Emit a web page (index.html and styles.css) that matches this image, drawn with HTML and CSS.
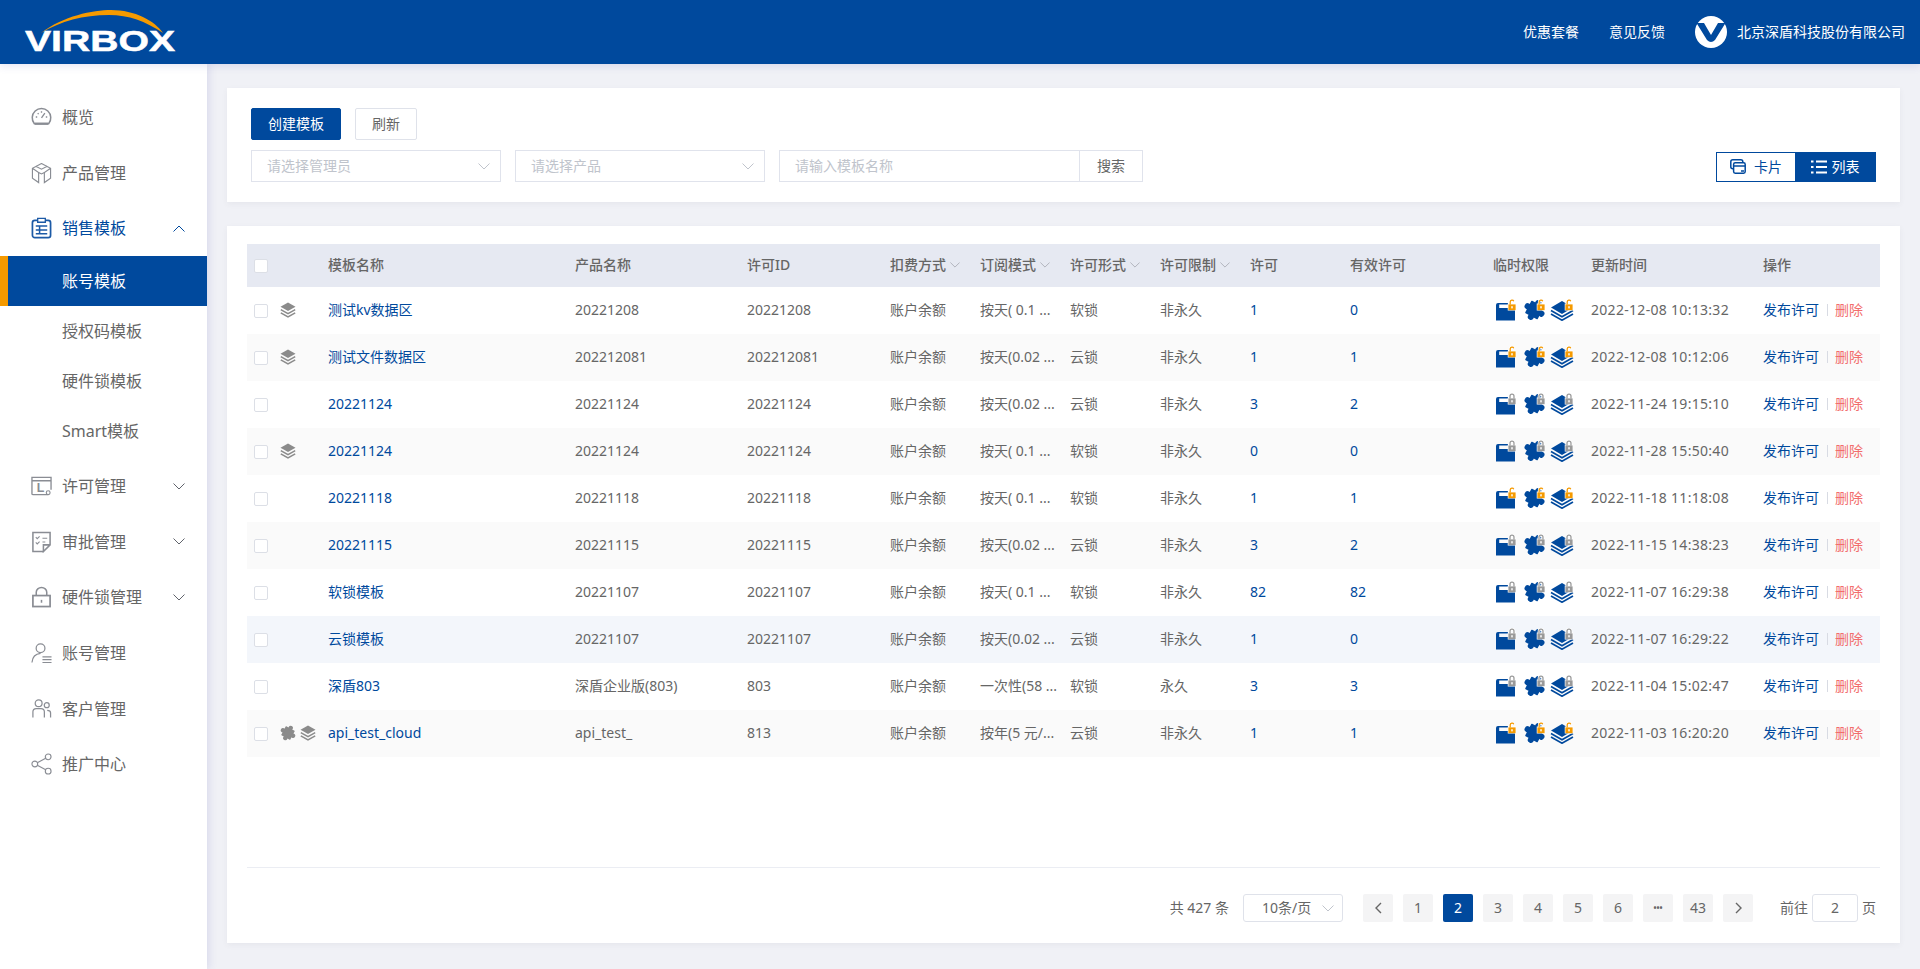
FILE: index.html
```html
<!DOCTYPE html>
<html lang="zh-CN">
<head>
<meta charset="utf-8">
<title>Virbox</title>
<link rel="stylesheet" href="styles.css">
</head>
<body>
<svg class="defs" width="0" height="0" aria-hidden="true">
  <symbol id="layers" viewBox="0 0 16 16">
    <path d="M8 0.5 15.5 4.7 8 9 0.5 4.7Z" fill="currentColor"/>
    <path d="M0.8 7.6 8 11.7 15.2 7.6M0.8 10.8 8 14.9 15.2 10.8" fill="none" stroke="currentColor" stroke-width="1.5"/>
  </symbol>
  <symbol id="puzzle" viewBox="0 0 20 20">
    <g transform="rotate(28 10 10)" fill="currentColor">
      <rect x="3.6" y="3.6" width="12.8" height="12.8" rx="0.6"/>
      <circle cx="10" cy="2.9" r="2.8"/>
      <circle cx="17.1" cy="10" r="2.8"/>
      <circle cx="10" cy="17.1" r="2.8"/>
      <circle cx="2.9" cy="10" r="2.8"/>
    </g>
  </symbol>
  <symbol id="perm-shapes" viewBox="0 0 80 22">
    <path d="M0 11H19V21.5H0Z" fill="#00499d"/>
    <path d="M0 11V6Q0 4 2 4H12V5.6H3.2V9H13V11Z" fill="#00499d"/>
    <use href="#puzzle" x="27.5" y="0" width="22" height="22" color="#00499d"/>
    <path d="M66 2 77 8.5 66 15 55 8.5Z" fill="#00499d"/>
    <path d="M55 11.5 66 17.7 77 11.5M55 15 66 21.2 77 15" fill="none" stroke="#00499d" stroke-width="1.7"/>
  </symbol>
  <symbol id="badge-open" viewBox="0 0 10 13">
    <rect x="0" y="5" width="10" height="8" fill="#fff"/>
    <path d="M3 6V3.2A2.1 2.1 0 0 1 7 2.4" fill="none" stroke="#fff" stroke-width="3"/>
    <rect x="1" y="6" width="8" height="6.5" fill="#f59a00"/>
    <path d="M3 6V3.2A2.1 2.1 0 0 1 7 2.4" fill="none" stroke="#f59a00" stroke-width="1.4"/>
    <rect x="4.2" y="8" width="1.6" height="2.4" fill="#fff"/>
  </symbol>
  <symbol id="badge-closed" viewBox="0 0 10 13">
    <rect x="0" y="5" width="10" height="8" fill="#fff"/>
    <path d="M2.8 6V3.4A2.2 2.2 0 0 1 7.2 3.4V6" fill="none" stroke="#fff" stroke-width="3"/>
    <rect x="1" y="6" width="8" height="6.5" fill="#999"/>
    <path d="M2.8 6V3.4A2.2 2.2 0 0 1 7.2 3.4V6" fill="none" stroke="#999" stroke-width="1.4"/>
    <rect x="4.2" y="8" width="1.6" height="2.4" fill="#fff"/>
  </symbol>
  <symbol id="perm-on" viewBox="0 0 80 22">
    <use href="#perm-shapes" width="80" height="22"/>
    <use href="#badge-open" x="11.5" y="0" width="9" height="11.7"/>
    <use href="#badge-open" x="40.5" y="0" width="9" height="11.7"/>
    <use href="#badge-open" x="68.5" y="0" width="9" height="11.7"/>
  </symbol>
  <symbol id="perm-off" viewBox="0 0 80 22">
    <use href="#perm-shapes" width="80" height="22"/>
    <use href="#badge-closed" x="11.5" y="0" width="9" height="11.7"/>
    <use href="#badge-closed" x="40.5" y="0" width="9" height="11.7"/>
    <use href="#badge-closed" x="68.5" y="0" width="9" height="11.7"/>
  </symbol>
  <symbol id="chev-d" viewBox="0 0 12 7"><path d="M0.5 0.5 6 6 11.5 0.5" fill="none" stroke="currentColor"/></symbol>
  <symbol id="chev-u" viewBox="0 0 12 7"><path d="M0.5 6.5 6 1 11.5 6.5" fill="none" stroke="currentColor"/></symbol>
</svg>

<header class="topbar">
  <div class="logo">
    <svg class="logo-svg" viewBox="0 0 150 44" width="150" height="44">
      <path d="M16 23C38 6 68 0 86 0 110 0 130 11 138 23 120 11 104 5 84 5 58 5 36 11 16 23Z" fill="#f59a00"/>
      <text x="0" y="41" class="logo-text" textLength="150" lengthAdjust="spacingAndGlyphs">VIRBOX</text>
    </svg>
  </div>
  <nav class="topnav">
    <a class="topnav-link">优惠套餐</a>
    <a class="topnav-link">意见反馈</a>
    <span class="company">
      <svg class="company-logo" viewBox="0 0 32 32" width="32" height="32">
        <circle cx="16" cy="16" r="16" fill="#fff"/>
        <path d="M1.5 7 H9 L16 19 L23 7 H30.5 L20 24 Q16 28 12 24Z" fill="#00499d"/>
      </svg>
      北京深盾科技股份有限公司
    </span>
  </nav>
</header>

<div class="layout">
  <aside class="sidebar">
    <ul class="menu">
      <li class="menu-item">
        <svg class="menu-icon" viewBox="0 0 22 22"><path d="M3.5 18A9.7 9.7 0 1 1 18.5 18Z" fill="none" stroke="currentColor" stroke-width="1.6"/><path d="M11 12 14.5 7M5 11H6.5M15.5 11H17M11 5V6.5M7 7 8 8" stroke="currentColor" stroke-width="1.4" fill="none"/><path d="M4 18H18" stroke="currentColor" stroke-width="2.4"/></svg>
        <span>概览</span>
      </li>
      <li class="menu-item">
        <svg class="menu-icon" viewBox="0 0 22 22"><path d="M11 1 20.5 6V16.5L14 21V10.5L20.5 6M11 1 1.5 6V16.5L8 21V10.5L1.5 6M8 10.5 11 12 14 10.5M5 4 11 7 17 4" fill="none" stroke="currentColor" stroke-width="1.2"/></svg>
        <span>产品管理</span>
      </li>
      <li class="menu-item is-open">
        <svg class="menu-icon" viewBox="0 0 22 22"><rect x="1.5" y="3" width="19" height="18" rx="2.5" fill="none" stroke="currentColor" stroke-width="1.8"/><path d="M7 1H15V5H7Z" fill="#fff" stroke="currentColor" stroke-width="1.4"/><path d="M5 9H17M5 13H17M5 17H17M9 9V17" stroke="currentColor" stroke-width="1.6" fill="none"/></svg>
        <span>销售模板</span>
        <svg class="menu-caret"><use href="#chev-u"/></svg>
      </li>
      <li class="submenu">
        <a class="sub-item is-active">账号模板</a>
        <a class="sub-item">授权码模板</a>
        <a class="sub-item">硬件锁模板</a>
        <a class="sub-item">Smart模板</a>
      </li>
      <li class="menu-item has-gap">
        <svg class="menu-icon" viewBox="0 0 22 22"><path d="M18 20H2Q1 20 1 19V2H21V15M1 5.5H21" fill="none" stroke="currentColor" stroke-width="1.4"/><text x="6" y="17" class="icon-letter">L</text><circle cx="18" cy="18" r="2" fill="none" stroke="currentColor" stroke-width="1.2"/></svg>
        <span>许可管理</span>
        <svg class="menu-caret"><use href="#chev-d"/></svg>
      </li>
      <li class="menu-item">
        <svg class="menu-icon" viewBox="0 0 22 22"><path d="M13 21H2V1H20V14L13 21V14H20" fill="none" stroke="currentColor" stroke-width="1.6"/><path d="M5 6 6.5 7.5 9 5M5 11.5 6.5 13 9 10.5M12 7H17M12 11H15" fill="none" stroke="currentColor" stroke-width="1.1"/></svg>
        <span>审批管理</span>
        <svg class="menu-caret"><use href="#chev-d"/></svg>
      </li>
      <li class="menu-item">
        <svg class="menu-icon" viewBox="0 0 22 22"><rect x="2" y="9.5" width="18" height="11.5" fill="none" stroke="currentColor" stroke-width="1.8"/><path d="M5.5 9.5V6A5.5 5 0 0 1 16.5 6V9.5" fill="none" stroke="currentColor" stroke-width="1.6"/><path d="M11 14V17" stroke="currentColor" stroke-width="1.6"/></svg>
        <span>硬件锁管理</span>
        <svg class="menu-caret"><use href="#chev-d"/></svg>
      </li>
      <li class="menu-item">
        <svg class="menu-icon" viewBox="0 0 22 22"><circle cx="10" cy="6" r="4.6" fill="none" stroke="currentColor" stroke-width="1.3"/><path d="M1 21C1.5 15 5 12 10 11.5" fill="none" stroke="currentColor" stroke-width="1.3"/><path d="M12 15H21.5M12 18H21.5M12 21H21.5" stroke="currentColor" stroke-width="1.2"/></svg>
        <span>账号管理</span>
      </li>
      <li class="menu-item">
        <svg class="menu-icon" viewBox="0 0 22 22"><circle cx="8" cy="5" r="3.6" fill="none" stroke="currentColor" stroke-width="1.3"/><circle cx="16.5" cy="7" r="2.6" fill="none" stroke="currentColor" stroke-width="1.3"/><path d="M2 20V14Q2 10.5 5.5 10.5H10.5Q14 10.5 14 14V20M17 12.5Q20.5 12.5 20.5 15V20" fill="none" stroke="currentColor" stroke-width="1.3"/></svg>
        <span>客户管理</span>
      </li>
      <li class="menu-item">
        <svg class="menu-icon" viewBox="0 0 22 22"><circle cx="4" cy="11" r="3" fill="none" stroke="currentColor" stroke-width="1.2"/><circle cx="18" cy="3.5" r="3" fill="none" stroke="currentColor" stroke-width="1.2"/><circle cx="18" cy="18.5" r="3" fill="none" stroke="currentColor" stroke-width="1.2"/><path d="M6.6 9.6 15.4 4.9M6.6 12.4 15.4 17.1" stroke="currentColor" stroke-width="1.2"/></svg>
        <span>推广中心</span>
      </li>
    </ul>
  </aside>

  <main class="main">
    <section class="card toolbar">
      <div class="toolbar-left">
        <div class="btn-row">
          <button class="btn btn-primary">创建模板</button>
          <button class="btn">刷新</button>
        </div>
        <div class="filter-row">
          <div class="select"><span>请选择管理员</span><svg class="select-caret"><use href="#chev-d"/></svg></div>
          <div class="select"><span>请选择产品</span><svg class="select-caret"><use href="#chev-d"/></svg></div>
          <div class="search">
            <span class="search-input">请输入模板名称</span>
            <span class="search-btn">搜索</span>
          </div>
        </div>
      </div>
      <div class="view-toggle">
        <span class="view-opt">
          <svg class="view-icon" viewBox="0 0 16 16"><rect x="0.8" y="0.8" width="12" height="9" rx="2" fill="none" stroke="currentColor" stroke-width="1.5"/><rect x="3.6" y="3.8" width="11.6" height="10.4" rx="1.6" fill="#fff" stroke="currentColor" stroke-width="1.5"/><path d="M3.6 7H15" stroke="currentColor" stroke-width="1.5"/><path d="M11 12H14" stroke="currentColor" stroke-width="1.5"/></svg>
          卡片
        </span>
        <span class="view-opt is-active">
          <svg class="view-icon" viewBox="0 0 16 16"><path d="M0 2.5H2.5M0 8H2.5M0 13.5H2.5M5 2.5H16M5 8H16M5 13.5H16" stroke="currentColor" stroke-width="2"/></svg>
          列表
        </span>
      </div>
    </section>

    <section class="card list-card">
      <div class="table">
        <div class="row row-head">
          <div class="cell-check"><i class="checkbox"></i></div>
          <div>模板名称</div><div>产品名称</div><div>许可ID</div>
          <div>扣费方式<svg class="sort"><use href="#chev-d"/></svg></div>
          <div>订阅模式<svg class="sort"><use href="#chev-d"/></svg></div>
          <div>许可形式<svg class="sort"><use href="#chev-d"/></svg></div>
          <div>许可限制<svg class="sort"><use href="#chev-d"/></svg></div>
          <div>许可</div><div>有效许可</div><div>临时权限</div><div>更新时间</div><div>操作</div>
        </div>

        <div class="row">
          <div class="cell-check"><i class="checkbox"></i><span class="flags"><svg class="flag"><use href="#layers"/></svg></span></div>
          <div class="link">测试kv数据区</div><div>20221208</div><div>20221208</div><div>账户余额</div><div>按天( 0.1 ...</div><div>软锁</div><div>非永久</div><div class="link">1</div><div class="link">0</div>
          <div><svg class="perm"><use href="#perm-on"/></svg></div><div class="date">2022-12-08 10:13:32</div>
          <div class="ops"><a class="link">发布许可</a><a class="danger">删除</a></div>
        </div>
        <div class="row">
          <div class="cell-check"><i class="checkbox"></i><span class="flags"><svg class="flag"><use href="#layers"/></svg></span></div>
          <div class="link">测试文件数据区</div><div>202212081</div><div>202212081</div><div>账户余额</div><div>按天(0.02 ...</div><div>云锁</div><div>非永久</div><div class="link">1</div><div class="link">1</div>
          <div><svg class="perm"><use href="#perm-on"/></svg></div><div class="date">2022-12-08 10:12:06</div>
          <div class="ops"><a class="link">发布许可</a><a class="danger">删除</a></div>
        </div>
        <div class="row">
          <div class="cell-check"><i class="checkbox"></i></div>
          <div class="link">20221124</div><div>20221124</div><div>20221124</div><div>账户余额</div><div>按天(0.02 ...</div><div>云锁</div><div>非永久</div><div class="link">3</div><div class="link">2</div>
          <div><svg class="perm"><use href="#perm-off"/></svg></div><div class="date">2022-11-24 19:15:10</div>
          <div class="ops"><a class="link">发布许可</a><a class="danger">删除</a></div>
        </div>
        <div class="row">
          <div class="cell-check"><i class="checkbox"></i><span class="flags"><svg class="flag"><use href="#layers"/></svg></span></div>
          <div class="link">20221124</div><div>20221124</div><div>20221124</div><div>账户余额</div><div>按天( 0.1 ...</div><div>软锁</div><div>非永久</div><div class="link">0</div><div class="link">0</div>
          <div><svg class="perm"><use href="#perm-off"/></svg></div><div class="date">2022-11-28 15:50:40</div>
          <div class="ops"><a class="link">发布许可</a><a class="danger">删除</a></div>
        </div>
        <div class="row">
          <div class="cell-check"><i class="checkbox"></i></div>
          <div class="link">20221118</div><div>20221118</div><div>20221118</div><div>账户余额</div><div>按天( 0.1 ...</div><div>软锁</div><div>非永久</div><div class="link">1</div><div class="link">1</div>
          <div><svg class="perm"><use href="#perm-on"/></svg></div><div class="date">2022-11-18 11:18:08</div>
          <div class="ops"><a class="link">发布许可</a><a class="danger">删除</a></div>
        </div>
        <div class="row">
          <div class="cell-check"><i class="checkbox"></i></div>
          <div class="link">20221115</div><div>20221115</div><div>20221115</div><div>账户余额</div><div>按天(0.02 ...</div><div>云锁</div><div>非永久</div><div class="link">3</div><div class="link">2</div>
          <div><svg class="perm"><use href="#perm-off"/></svg></div><div class="date">2022-11-15 14:38:23</div>
          <div class="ops"><a class="link">发布许可</a><a class="danger">删除</a></div>
        </div>
        <div class="row">
          <div class="cell-check"><i class="checkbox"></i></div>
          <div class="link">软锁模板</div><div>20221107</div><div>20221107</div><div>账户余额</div><div>按天( 0.1 ...</div><div>软锁</div><div>非永久</div><div class="link">82</div><div class="link">82</div>
          <div><svg class="perm"><use href="#perm-off"/></svg></div><div class="date">2022-11-07 16:29:38</div>
          <div class="ops"><a class="link">发布许可</a><a class="danger">删除</a></div>
        </div>
        <div class="row is-hover">
          <div class="cell-check"><i class="checkbox"></i></div>
          <div class="link">云锁模板</div><div>20221107</div><div>20221107</div><div>账户余额</div><div>按天(0.02 ...</div><div>云锁</div><div>非永久</div><div class="link">1</div><div class="link">0</div>
          <div><svg class="perm"><use href="#perm-off"/></svg></div><div class="date">2022-11-07 16:29:22</div>
          <div class="ops"><a class="link">发布许可</a><a class="danger">删除</a></div>
        </div>
        <div class="row">
          <div class="cell-check"><i class="checkbox"></i></div>
          <div class="link">深盾803</div><div>深盾企业版(803)</div><div>803</div><div>账户余额</div><div>一次性(58 ...</div><div>软锁</div><div>永久</div><div class="link">3</div><div class="link">3</div>
          <div><svg class="perm"><use href="#perm-off"/></svg></div><div class="date">2022-11-04 15:02:47</div>
          <div class="ops"><a class="link">发布许可</a><a class="danger">删除</a></div>
        </div>
        <div class="row">
          <div class="cell-check"><i class="checkbox"></i><span class="flags"><svg class="flag"><use href="#puzzle"/></svg><svg class="flag"><use href="#layers"/></svg></span></div>
          <div class="link">api_test_cloud</div><div>api_test_</div><div>813</div><div>账户余额</div><div>按年(5 元/...</div><div>云锁</div><div>非永久</div><div class="link">1</div><div class="link">1</div>
          <div><svg class="perm"><use href="#perm-on"/></svg></div><div class="date">2022-11-03 16:20:20</div>
          <div class="ops"><a class="link">发布许可</a><a class="danger">删除</a></div>
        </div>
      </div>

      <div class="pager">
        <span class="pager-total">共 427 条</span>
        <div class="pager-size"><span>10条/页</span><svg class="select-caret"><use href="#chev-d"/></svg></div>
        <div class="pager-pages">
          <a class="page"><svg class="page-arrow" viewBox="0 0 7 12"><path d="M6 1 1 6 6 11" fill="none" stroke="currentColor" stroke-width="1.4"/></svg></a>
          <a class="page">1</a>
          <a class="page is-current">2</a>
          <a class="page">3</a>
          <a class="page">4</a>
          <a class="page">5</a>
          <a class="page">6</a>
          <a class="page page-more">•••</a>
          <a class="page">43</a>
          <a class="page"><svg class="page-arrow" viewBox="0 0 7 12"><path d="M1 1 6 6 1 11" fill="none" stroke="currentColor" stroke-width="1.4"/></svg></a>
        </div>
        <div class="pager-jump"><span>前往</span><span class="jump-input">2</span><span>页</span></div>
      </div>
    </section>
  </main>
</div>
</body>
</html>
```
FILE: styles.css
```css
* { box-sizing: border-box; }
html, body { margin: 0; height: 100%; }
body {
  height: 969px;
  overflow: hidden;
  display: flex;
  flex-direction: column;
  background: #f0f1f6;
  color: #666;
  font: 14px/20px "Noto Sans", "Noto Sans CJK SC", sans-serif;
}
ul { list-style: none; margin: 0; padding: 0; }
a { text-decoration: none; }
.defs { position: absolute; }

/* top bar */
.topbar {
  flex: none;
  position: relative;
  z-index: 2;
  height: 64px;
  background: #00499d;
  color: #fff;
  display: flex;
  align-items: center;
  justify-content: space-between;
  padding: 0 15px 0 25px;
  box-shadow: 0 2px 8px rgba(80, 80, 180, .15);
}
.logo { height: 64px; padding-top: 10px; }
.logo-svg { display: block; overflow: visible; }
.logo-text { font: 700 29px "Liberation Sans", sans-serif; fill: #fff; stroke: #fff; stroke-width: .5px; }
.topnav { display: flex; align-items: center; gap: 30px; }
.topnav-link { color: #fff; }
.company { display: flex; align-items: center; gap: 10px; }
.company-logo { display: block; }

/* sidebar */
.layout { flex: 1; display: flex; min-height: 0; }
.sidebar {
  flex: none;
  width: 207px;
  background: #fff;
  padding-top: 25.2px;
  box-shadow: 2px 0 8px rgba(80, 80, 180, .15);
  position: relative;
  z-index: 1;
}
.menu-item {
  height: 55.6px;
  display: flex;
  align-items: center;
  padding-left: 31px;
  font-size: 16px;
  color: #666;
}
.menu-item.has-gap { margin-top: 2.4px; }
.menu-item.is-open { color: #00499d; }
.menu-icon { width: 21px; height: 22px; margin-right: 10px; color: #8a8d94; flex: none; }
.is-open .menu-icon { color: #1c5aa6; }
.icon-letter { font: 700 13px "Liberation Sans", sans-serif; fill: currentColor; }
.menu-caret { width: 12px; height: 7px; margin-left: auto; margin-right: 22px; color: #60636b; }
.is-open .menu-caret { color: #00499d; }
.menu-item span { white-space: nowrap; }
.sub-item {
  display: block;
  height: 50px;
  line-height: 50px;
  padding-left: 62px;
  font-size: 16px;
  color: #666;
}
.sub-item.is-active {
  background: #00499d;
  color: #fff;
  border-left: 8px solid #f59a00;
  padding-left: 54px;
}

/* main */
.main { flex: 1; min-width: 0; padding: 24px 20px 0; }
.card { background: #fff; box-shadow: 0 2px 6px rgba(60, 60, 90, .06); }
.toolbar {
  height: 114px;
  padding: 20px 24px;
  display: flex;
  justify-content: space-between;
  align-items: flex-end;
}
.btn-row { display: flex; gap: 14px; margin-bottom: 10px; }
.btn {
  height: 32px;
  width: 62px;
  border: 1px solid #dfe2ea;
  border-radius: 2px;
  background: #fff;
  color: #666;
  font: inherit;
  padding: 0;
}
.btn-primary { width: 90px; background: #00499d; border-color: #00499d; color: #fff; }
.filter-row { display: flex; gap: 14px; }
.select {
  width: 250px;
  height: 32px;
  border: 1px solid #e0e3ec;
  color: #c0c4cc;
  display: flex;
  align-items: center;
  justify-content: space-between;
  padding: 0 10px 0 15px;
}
.select-caret { width: 12px; height: 7px; color: #c0c4cc; }
.search { display: flex; width: 364px; height: 32px; border: 1px solid #e0e3ec; }
.search-input { flex: 1; color: #c0c4cc; padding-left: 15px; line-height: 30px; }
.search-btn { width: 63px; text-align: center; line-height: 30px; border-left: 1px solid #e0e3ec; color: #666; }
.view-toggle { display: flex; height: 30px; border: 1px solid #00499d; }
.view-opt {
  width: 78px;
  display: flex;
  align-items: center;
  justify-content: center;
  gap: 8px;
  color: #00499d;
}
.view-opt.is-active { width: 80px; gap: 5px; background: #00499d; color: #fff; }
.view-icon { width: 16px; height: 16px; flex: none; }

/* table */
.list-card {
  height: 717px;
  margin-top: 24px;
  padding: 18px 20px 0;
}
.table { height: 624px; border-bottom: 1px solid #ebedf3; }
.row {
  display: grid;
  grid-template-columns: 81px 247px 172px 143px 90px 90px 90px 90px 100px 143px 98px 172px 117px;
  align-items: center;
  height: 47px;
  padding-bottom: 2px;
  white-space: nowrap;
}
.row:nth-child(odd) { background: #fafafa; }
.table .row-head { height: 43px; background: #e6e9f2; font-weight: 500; color: #666; }
.row.is-hover { background: #f3f6fb; }
.cell-check { display: flex; align-items: center; padding-left: 7px; }
.row .checkbox { margin-top: 2px; }
.checkbox {
  width: 14px;
  height: 14px;
  border: 1px solid #dcdfe6;
  border-radius: 2px;
  background: #fff;
  flex: none;
}
.flags { display: flex; gap: 4px; margin-left: 12px; }
.flag { width: 16px; height: 16px; color: #8b8b8b; display: block; }
.link { color: #00499d; }
.danger { color: #f26d6d; }
.date { letter-spacing: .3px; }
.sort { width: 10px; height: 6px; margin-left: 4px; color: #a8abb3; vertical-align: 2px; }
.perm { width: 80px; height: 22px; margin-left: 3px; display: block; }
.ops { display: flex; align-items: center; }
.ops .link { padding-right: 8px; border-right: 1px solid #d8dbe3; line-height: 12px; margin-right: 7px; }

/* pager */
.pager {
  display: flex;
  align-items: center;
  justify-content: flex-end;
  margin-top: 26px;
  height: 28px;
  padding-right: 4px;
  color: #666;
}
.pager-total { margin-right: 14px; }
.pager-size {
  width: 100px;
  height: 28px;
  border: 1px solid #dfe2ea;
  border-radius: 3px;
  display: flex;
  align-items: center;
  justify-content: space-between;
  padding: 0 8px 0 18px;
  margin-right: 20px;
}
.pager-pages { display: flex; gap: 10px; margin-right: 27px; }
.page {
  width: 30px;
  height: 28px;
  border-radius: 2px;
  background: #f4f4f5;
  color: #666;
  display: flex;
  align-items: center;
  justify-content: center;
}
.page.is-current { background: #00499d; color: #fff; }
.page-more { font-size: 8px; font-weight: 700; }
.page-arrow { width: 7px; height: 12px; }
.pager-jump { display: flex; align-items: center; gap: 4px; }
.jump-input {
  width: 46px;
  height: 28px;
  border: 1px solid #dfe2ea;
  border-radius: 3px;
  text-align: center;
  line-height: 26px;
}
```
